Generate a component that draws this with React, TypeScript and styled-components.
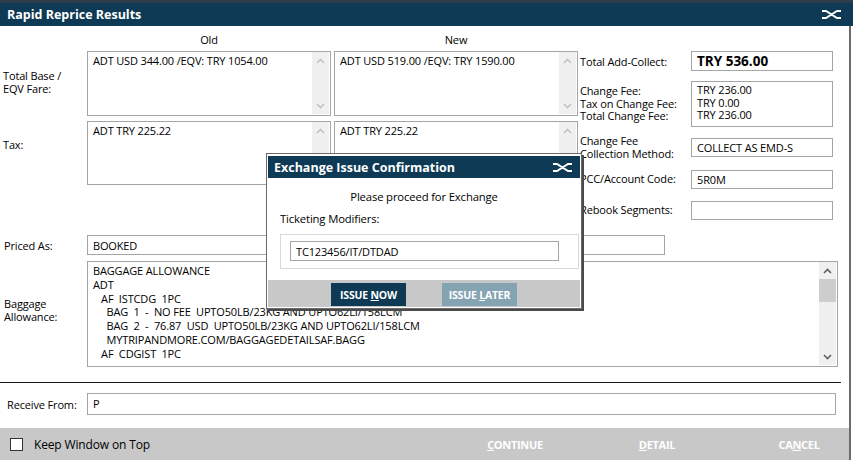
import React from "react";
import styled, { createGlobalStyle } from "styled-components";

const GlobalStyle = createGlobalStyle`
  body {
    margin: 0;
    background: #fff;
    font-family: "Segoe UI", "Open Sans", sans-serif;
    font-size: 11px;
    letter-spacing: -0.15px;
    color: #000;
  }
`;

const Page = styled.div`
  position: relative;
  width: 853px;
  height: 460px;
  overflow: hidden;
  background: #fff;
  border-top: 3px solid #2f3d48;
  box-sizing: border-box;
`;

const TitleBar = styled.div<{ $small?: boolean }>`
  display: flex;
  align-items: center;
  justify-content: space-between;
  height: ${(p) => (p.$small ? "22px" : "23px")};
  padding: ${(p) => (p.$small ? "0 8px 0 6px" : "0 12px 0 7px")};
  background: #0e3a55;
  color: #fff;
  font-weight: bold;
  font-size: 12.5px;
  letter-spacing: 0;
`;

const Body = styled.div`
  width: 851px;
  height: 434px;
  box-sizing: border-box;
  border-right: 2px solid #6b6b6b;
  display: flex;
  flex-direction: column;
`;

const TopGrid = styled.div`
  display: grid;
  grid-template-columns: 84px 244px 244px 253px;
  grid-template-rows: 20px 65px 64px 30px;
  column-gap: 3px;
  row-gap: 5px;
`;

const ColHead = styled.div`
  align-self: end;
  text-align: center;
  line-height: 14px;
  margin-bottom: -1px;
`;

const Label = styled.div<{ $top?: number; $left?: number }>`
  padding-left: ${(p) => p.$left ?? 3}px;
  padding-top: ${(p) => p.$top ?? 0}px;
  line-height: 13px;
  align-self: ${(p) => (p.$top !== undefined ? "start" : "center")};
`;

const TextBox = styled.div<{ $width?: number; $height?: number }>`
  display: flex;
  border: 1px solid #a5a5a5;
  box-sizing: border-box;
  background: #fff;
  ${(p) => (p.$width ? `width: ${p.$width}px;` : "")}
  ${(p) => (p.$height ? `height: ${p.$height}px;` : "")}
`;

const BoxText = styled.div<{ $bold?: boolean; $lh?: number }>`
  flex: 1;
  padding: 2px 5px;
  white-space: pre;
  overflow: hidden;
  line-height: ${(p) => p.$lh ?? 14}px;
  font-weight: ${(p) => (p.$bold ? "bold" : "normal")};
  font-size: ${(p) => (p.$bold ? "13.5px" : "11px")};
  letter-spacing: ${(p) => (p.$bold ? "0" : "-0.15px")};
`;

const ScrollTrack = styled.div`
  width: 17px;
  margin: 0 1px 1px 0;
  background: #f0f0f0;
  display: flex;
  flex-direction: column;
  align-items: center;
`;

const ArrowBtn = styled.div`
  height: 17px;
  width: 17px;
  display: flex;
  align-items: center;
  justify-content: center;
`;

const Thumb = styled.div`
  width: 17px;
  height: 23px;
  background: #cdcdcd;
`;

const Spacer = styled.div`
  flex: 1;
`;

const Chevron = ({ up, color }: { up?: boolean; color: string }) => (
  <svg width="9" height="6" viewBox="0 0 9 6">
    <path
      d={up ? "M1 5L4.5 1.5L8 5" : "M1 1L4.5 4.5L8 1"}
      stroke={color}
      strokeWidth="1.6"
      fill="none"
    />
  </svg>
);

const Scroll = ({ active }: { active?: boolean }) => {
  const color = active ? "#606060" : "#c2c2c2";
  return (
    <ScrollTrack>
      <ArrowBtn>
        <Chevron up color={color} />
      </ArrowBtn>
      {active && <Thumb />}
      <Spacer />
      <ArrowBtn>
        <Chevron color={color} />
      </ArrowBtn>
    </ScrollTrack>
  );
};

const RightCol = styled.div`
  grid-column: 4;
  grid-row: 2 / span 3;
  display: flex;
  flex-direction: column;
  margin-left: -1px;
`;

const RightRow = styled.div<{ $gap: number; $h: number }>`
  display: flex;
  align-items: center;
  height: ${(p) => p.$h}px;
  margin-top: ${(p) => p.$gap}px;
`;

const SideLabel = styled.div<{ $pad?: number }>`
  width: 111px;
  flex: none;
  line-height: 12.5px;
  padding-top: ${(p) => p.$pad ?? 0}px;
  white-space: pre;
`;

const SideBox = styled(TextBox)`
  width: 142px;
  height: 100%;
`;

const FieldRow = styled.div<{ $gap: number }>`
  display: flex;
  align-items: center;
  margin-top: ${(p) => p.$gap}px;
`;

const RowLabel = styled.div<{ $left: number; $lift?: number }>`
  width: ${(p) => 87 - p.$left}px;
  padding-left: ${(p) => p.$left}px;
  margin-top: ${(p) => -(p.$lift ?? 0) * 2}px;
  line-height: 13px;
`;

const Divider = styled.div`
  width: 841px;
  height: 1px;
  background: #1a1a1a;
  margin-top: 15px;
`;

const Footer = styled.div`
  margin-top: 13px;
  height: 32px;
  background: #c8c8c8;
  display: flex;
  align-items: center;
  padding-left: 10px;
`;

const CheckBox = styled.div`
  width: 13px;
  height: 13px;
  box-sizing: border-box;
  border: 1px solid #333;
  background: #fff;
`;

const CheckLabel = styled.div`
  margin-left: 11px;
  flex: 1;
  font-size: 12px;
`;

const FooterButtons = styled.div`
  display: flex;
  gap: 42px;
`;

const FlatButton = styled.div`
  width: 100px;
  text-align: center;
  color: #fff;
  font-weight: bold;
  font-size: 11px;
  letter-spacing: -0.3px;
`;

const U = styled.span`
  text-decoration: underline;
`;

/* modal */

const Modal = styled.div`
  position: absolute;
  left: 266px;
  top: 150px;
  width: 312px;
  padding: 2px 1px 1px;
  background: #fff;
  border: 1px solid #6a6a6a;
  box-shadow: 2px 2px 0 #4a4a4a;
`;

const ModalMessage = styled.div`
  margin-top: 12px;
  text-align: center;
  line-height: 14px;
  font-size: 11.3px;
`;

const ModalLabel = styled.div`
  margin: 8px 0 0 12px;
  line-height: 14px;
  font-size: 11.3px;
`;

const GroupBox = styled.div`
  margin: 8px 0 0 12px;
  width: 299px;
  height: 35px;
  box-sizing: border-box;
  border: 1px solid #d8d8d8;
  padding: 6px 0 0 9px;
`;

const ModalFooter = styled.div`
  margin-top: 11px;
  height: 27px;
  background: #c8c8c8;
  display: flex;
  justify-content: center;
  gap: 36px;
  padding-top: 3px;
  box-sizing: border-box;
`;

const ModalButton = styled.div<{ $muted?: boolean }>`
  width: 75px;
  height: 23px;
  display: flex;
  align-items: center;
  justify-content: center;
  background: ${(p) => (p.$muted ? "#84a4b4" : "#0e3a55")};
  color: #fff;
  font-weight: bold;
  font-size: 10.5px;
  letter-spacing: -0.2px;
`;

const CloseIcon = () => (
  <svg width="19" height="9" viewBox="0 0 19 9">
    <path d="M0 1h4l11 7h4M0 8h4l11-7h4" stroke="#fff" strokeWidth="2" fill="none" />
  </svg>
);

const baggage = `BAGGAGE ALLOWANCE
ADT
   AF  ISTCDG  1PC
     BAG  1  -  NO FEE  UPTO50LB/23KG AND UPTO62LI/158LCM
     BAG  2  -  76.87  USD  UPTO50LB/23KG AND UPTO62LI/158LCM
     MYTRIPANDMORE.COM/BAGGAGEDETAILSAF.BAGG
   AF  CDGIST  1PC`;

const App = () => {
  return (
    <>
      <GlobalStyle />
      <Page>
        <TitleBar>
          <span>Rapid Reprice Results</span>
          <CloseIcon />
        </TitleBar>
        <Body>
          <TopGrid>
            <div />
            <ColHead>Old</ColHead>
            <ColHead>New</ColHead>
            <div />

            <Label $top={18}>
              Total Base /
              <br />
              EQV Fare:
            </Label>
            <TextBox>
              <BoxText>ADT USD 344.00 /EQV: TRY 1054.00</BoxText>
              <Scroll />
            </TextBox>
            <TextBox>
              <BoxText>ADT USD 519.00 /EQV: TRY 1590.00</BoxText>
              <Scroll />
            </TextBox>
            <RightCol>
              <RightRow $gap={0} $h={20}>
                <SideLabel $pad={3}>Total Add-Collect:</SideLabel>
                <SideBox>
                  <BoxText $bold $lh={15}>TRY 536.00</BoxText>
                </SideBox>
              </RightRow>
              <RightRow $gap={10} $h={46}>
                <SideLabel>{"Change Fee:\nTax on Change Fee:\nTotal Change Fee:"}</SideLabel>
                <SideBox>
                  <BoxText $lh={12.5}>{"TRY 236.00\nTRY 0.00\nTRY 236.00"}</BoxText>
                </SideBox>
              </RightRow>
              <RightRow $gap={11} $h={19}>
                <SideLabel>{"Change Fee\nCollection Method:"}</SideLabel>
                <SideBox>
                  <BoxText $lh={14}>COLLECT AS EMD-S</BoxText>
                </SideBox>
              </RightRow>
              <RightRow $gap={13} $h={19}>
                <SideLabel>PCC/Account Code:</SideLabel>
                <SideBox>
                  <BoxText $lh={14}>5R0M</BoxText>
                </SideBox>
              </RightRow>
              <RightRow $gap={12} $h={19}>
                <SideLabel $pad={0}>Rebook Segments:</SideLabel>
                <SideBox />
              </RightRow>
            </RightCol>

            <Label $top={17}>Tax:</Label>
            <TextBox>
              <BoxText>ADT TRY 225.22</BoxText>
              <Scroll />
            </TextBox>
            <TextBox>
              <BoxText>ADT TRY 225.22</BoxText>
              <Scroll />
            </TextBox>
          </TopGrid>

          <FieldRow $gap={15}>
            <RowLabel $left={4}>Priced As:</RowLabel>
            <TextBox $width={578} $height={20}>
              <BoxText $lh={15}>BOOKED</BoxText>
            </TextBox>
          </FieldRow>

          <FieldRow $gap={6}>
            <RowLabel $left={4} $lift={4}>
              Baggage
              <br />
              Allowance:
            </RowLabel>
            <TextBox $width={751} $height={106}>
              <BoxText $lh={13.8}>{baggage}</BoxText>
              <Scroll active />
            </TextBox>
          </FieldRow>

          <Divider />

          <FieldRow $gap={10}>
            <RowLabel $left={7}>Receive From:</RowLabel>
            <TextBox $width={749} $height={22}>
              <BoxText $lh={16}>P</BoxText>
            </TextBox>
          </FieldRow>

          <Footer>
            <CheckBox />
            <CheckLabel>Keep Window on Top</CheckLabel>
            <FooterButtons>
              <FlatButton>
                <U>C</U>ONTINUE
              </FlatButton>
              <FlatButton>
                <U>D</U>ETAIL
              </FlatButton>
              <FlatButton>
                CA<U>N</U>CEL
              </FlatButton>
            </FooterButtons>
          </Footer>
        </Body>

        <Modal>
          <TitleBar $small>
            <span>Exchange Issue Confirmation</span>
            <CloseIcon />
          </TitleBar>
          <ModalMessage>Please proceed for Exchange</ModalMessage>
          <ModalLabel>Ticketing Modifiers:</ModalLabel>
          <GroupBox>
            <TextBox $width={269} $height={20}>
              <BoxText $lh={15}>TC123456/IT/DTDAD</BoxText>
            </TextBox>
          </GroupBox>
          <ModalFooter>
            <ModalButton>
              ISSUE&nbsp;<U>N</U>OW
            </ModalButton>
            <ModalButton $muted>
              ISSUE&nbsp;<U>L</U>ATER
            </ModalButton>
          </ModalFooter>
        </Modal>
      </Page>
    </>
  );
};

export default App;
